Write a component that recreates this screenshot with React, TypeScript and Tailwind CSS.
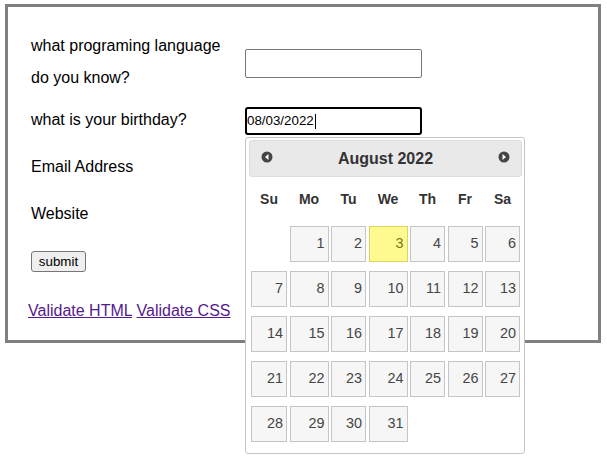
const weekDays = ["Su", "Mo", "Tu", "We", "Th", "Fr", "Sa"];

// August 2022 starts on a Monday
const cells: (number | null)[] = [null, ...Array.from({ length: 31 }, (_, i) => i + 1)];

function CircleArrow({ dir }: { dir: "left" | "right" }) {
  return (
    <svg width="12" height="12" viewBox="0 0 12 12">
      <circle cx="6" cy="6" r="5.5" fill="#454545" />
      {dir === "left" ? (
        <polygon points="7.5,3 4,6 7.5,9" fill="#ffffff" />
      ) : (
        <polygon points="4.5,3 8,6 4.5,9" fill="#ffffff" />
      )}
    </svg>
  );
}

function DatePicker() {
  return (
    <div className="absolute left-[245px] top-[137px] w-[280px] rounded-[3px] border border-[#c5c5c5] bg-white pl-[3px] pr-[2px] pt-[2px] pb-[11px] font-['Liberation_Sans',Arial,sans-serif]">
      <div className="flex h-[37px] items-center justify-between rounded-[3px] border border-[#dddddd] bg-[#e9e9e9] px-[11px] text-[#333333]">
        <span className="-mt-[3px]">
          <CircleArrow dir="left" />
        </span>
        <span className="text-[16px] font-bold">August 2022</span>
        <span className="-mt-[3px]">
          <CircleArrow dir="right" />
        </span>
      </div>
      <div className="mx-[2px] mt-[4px] grid auto-rows-[36px] grid-cols-[36px_39px_35px_39px_35px_35px_35px] gap-x-[2.5px] gap-y-[9px]">
        {weekDays.map((d) => (
          <div key={d} className="flex items-center justify-center text-[14px] font-bold text-[#333333]">
            {d}
          </div>
        ))}
        {cells.map((n, i) =>
          n === null ? (
            <div key={i} />
          ) : n === 3 ? (
            <div
              key={i}
              className="flex items-center justify-end border border-[#dad55e] bg-[#fffa90] pr-[3px] text-[14.4px] text-[#777620]"
            >
              {n}
            </div>
          ) : (
            <div
              key={i}
              className="flex items-center justify-end border border-[#c5c5c5] bg-[#f6f6f6] pr-[3px] text-[14.4px] text-[#454545]"
            >
              {n}
            </div>
          )
        )}
      </div>
    </div>
  );
}

export default function App() {
  return (
    <div className="relative h-[470px] w-[607px] bg-white pl-[5px] pt-[4px] font-['Liberation_Sans',Arial,sans-serif] text-black">
      <div className="h-[339px] w-[596px] border-[3px] border-[#808080] pl-[23px] pt-[23px]">
        <div className="flex items-start">
          <label className="w-[214px] text-[16px] leading-[32px]">
            what programing language
            <br />
            do you know?
          </label>
          <div className="mt-[19px] h-[29px] w-[177px] rounded-[2px] border border-[#767676] bg-white" />
        </div>

        <div className="mt-[10px] flex items-start">
          <label className="w-[214px] text-[16px] leading-[32px]">what is your birthday?</label>
          <div className="mt-[3px] flex h-[28px] w-[177px] items-center rounded-[3px] border-2 border-black bg-white text-[13.33px]">
            <span>08/03/2022</span>
            <span className="ml-[1px] h-[15px] w-[1px] bg-black" />
          </div>
        </div>

        <div className="mt-[15px] flex items-start">
          <label className="w-[214px] text-[16px] leading-[32px]">Email Address</label>
        </div>

        <div className="mt-[15px] flex items-start">
          <label className="w-[214px] text-[16px] leading-[32px]">Website</label>
        </div>

        <button className="mt-[21px] flex h-[21px] w-[55px] items-center justify-center rounded-[3px] border border-[#767676] bg-[#efefef] text-[13.33px] text-black">
          submit
        </button>

        <p className="-ml-[3px] mt-[27px] text-[16px]">
          <a href="#" className="text-[#551a8b] underline">
            Validate HTML
          </a>{" "}
          <a href="#" className="text-[#551a8b] underline">
            Validate CSS
          </a>
        </p>
      </div>

      <DatePicker />
    </div>
  );
}
